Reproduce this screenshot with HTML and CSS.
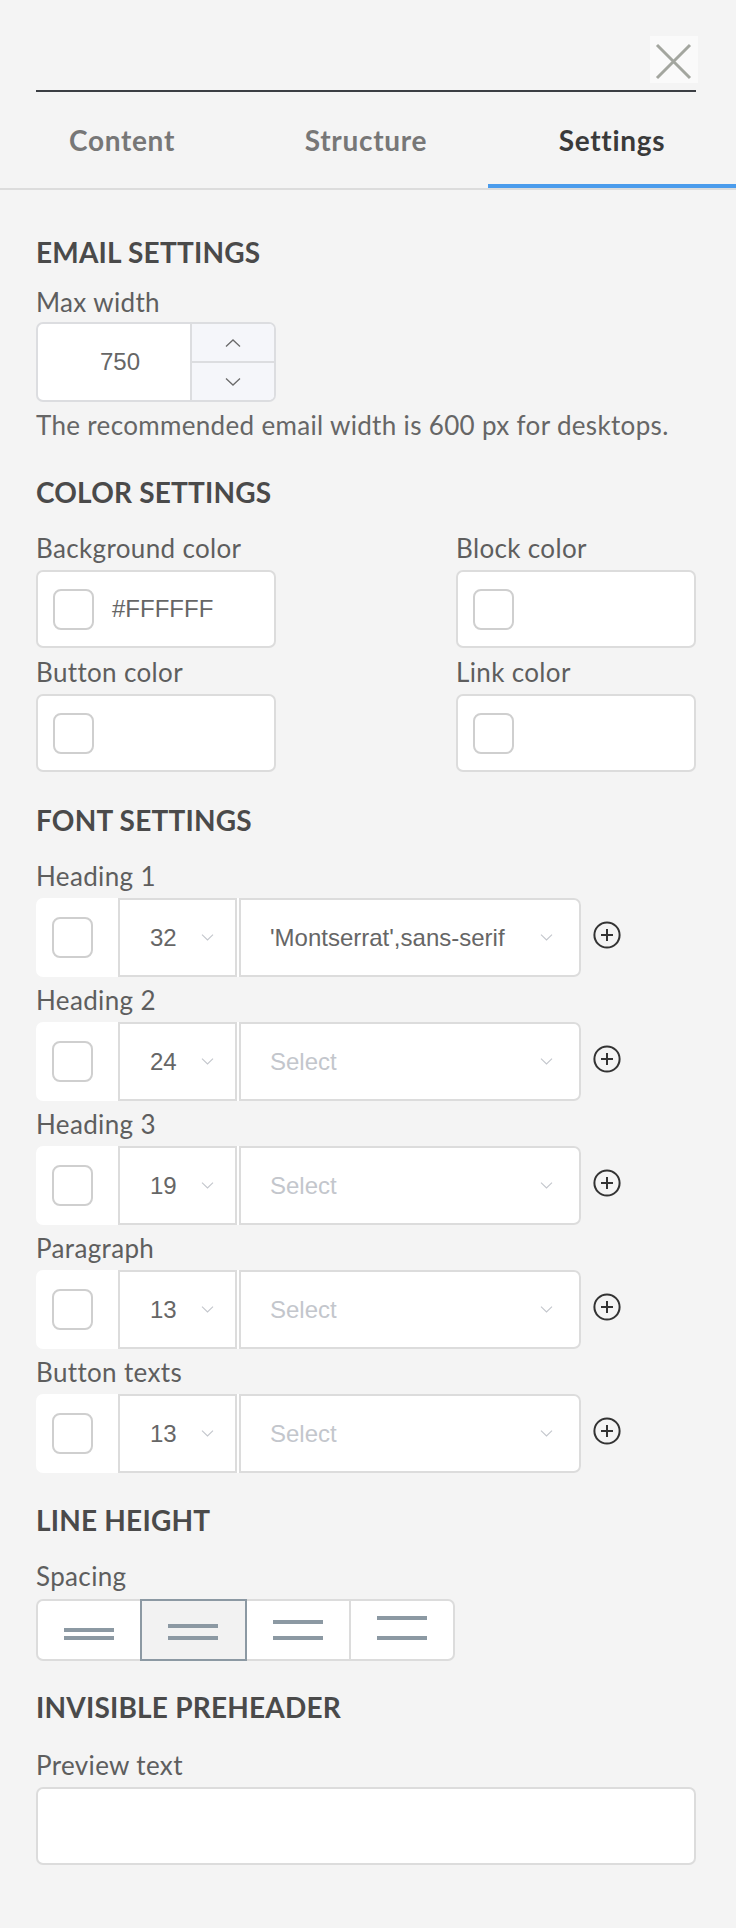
FILE: index.html
```html
<!DOCTYPE html>
<html lang="en">
<head>
<meta charset="utf-8">
<title>Settings</title>
<link rel="stylesheet" href="styles.css">
</head>
<body>
<div class="panel">
  <header class="topbar">
    <div class="title-field"></div>
    <button class="close" aria-label="Close">
      <svg width="48" height="47" viewBox="0 0 48 47"><path d="M7 9 L40 42 M40 9 L7 42" stroke="#a3a69f" stroke-width="3" fill="none"/></svg>
    </button>
  </header>

  <nav class="tabs">
    <div class="tab">Content</div>
    <div class="tab">Structure</div>
    <div class="tab active">Settings</div>
  </nav>

  <main class="content">
    <section class="section first">
      <h2 class="sec-title tight">EMAIL SETTINGS</h2>
      <div class="field-label short">Max width</div>
      <div class="stepper">
        <div class="stepper-value">750</div>
        <div class="stepper-btns">
          <div class="step-btn"><svg width="16" height="8" viewBox="0 0 16 8"><path d="M1 7.5 L8 1 L15 7.5" stroke="#6b6b6b" stroke-width="1.3" fill="none"/></svg></div>
          <div class="step-btn"><svg width="16" height="8" viewBox="0 0 16 8"><path d="M1 0.5 L8 7 L15 0.5" stroke="#6b6b6b" stroke-width="1.3" fill="none"/></svg></div>
        </div>
      </div>
      <p class="hint">The recommended email width is 600 px for desktops.</p>
    </section>

    <section class="section color-sec">
      <h2 class="sec-title">COLOR SETTINGS</h2>
      <div class="color-grid">
        <div class="field">
          <div class="field-label">Background color</div>
          <div class="color-box"><span class="swatch"></span><span class="hex">#FFFFFF</span></div>
        </div>
        <div class="field">
          <div class="field-label">Block color</div>
          <div class="color-box"><span class="swatch"></span></div>
        </div>
        <div class="field">
          <div class="field-label">Button color</div>
          <div class="color-box"><span class="swatch"></span></div>
        </div>
        <div class="field">
          <div class="field-label">Link color</div>
          <div class="color-box"><span class="swatch"></span></div>
        </div>
      </div>
    </section>

    <section class="section font-sec">
      <h2 class="sec-title">FONT SETTINGS</h2>
      <div class="font-list">
        <div class="font-item">
          <div class="field-label">Heading 1</div>
          <div class="font-row">
            <div class="font-fields">
              <div class="swatch-cell"><span class="swatch"></span></div>
              <div class="size-cell"><span class="val">32</span><svg class="chev" width="13" height="7" viewBox="0 0 13 7"><path d="M1 0.7 L6.5 6 L12 0.7" stroke="#c3c6cc" stroke-width="1.1" fill="none"/></svg></div>
              <div class="family-cell"><span class="val">'Montserrat',sans-serif</span><svg class="chev" width="13" height="7" viewBox="0 0 13 7"><path d="M1 0.7 L6.5 6 L12 0.7" stroke="#c3c6cc" stroke-width="1.1" fill="none"/></svg></div>
            </div>
            <svg class="plus" width="28" height="28" viewBox="0 0 28 28"><circle cx="14" cy="14" r="12.6" stroke="#333" stroke-width="2" fill="none"/><path d="M14 8 V20 M8 14 H20" stroke="#333" stroke-width="2"/></svg>
          </div>
        </div>
        <div class="font-item">
          <div class="field-label">Heading 2</div>
          <div class="font-row">
            <div class="font-fields">
              <div class="swatch-cell"><span class="swatch"></span></div>
              <div class="size-cell"><span class="val">24</span><svg class="chev" width="13" height="7" viewBox="0 0 13 7"><path d="M1 0.7 L6.5 6 L12 0.7" stroke="#c3c6cc" stroke-width="1.1" fill="none"/></svg></div>
              <div class="family-cell"><span class="val placeholder">Select</span><svg class="chev" width="13" height="7" viewBox="0 0 13 7"><path d="M1 0.7 L6.5 6 L12 0.7" stroke="#c3c6cc" stroke-width="1.1" fill="none"/></svg></div>
            </div>
            <svg class="plus" width="28" height="28" viewBox="0 0 28 28"><circle cx="14" cy="14" r="12.6" stroke="#333" stroke-width="2" fill="none"/><path d="M14 8 V20 M8 14 H20" stroke="#333" stroke-width="2"/></svg>
          </div>
        </div>
        <div class="font-item">
          <div class="field-label">Heading 3</div>
          <div class="font-row">
            <div class="font-fields">
              <div class="swatch-cell"><span class="swatch"></span></div>
              <div class="size-cell"><span class="val">19</span><svg class="chev" width="13" height="7" viewBox="0 0 13 7"><path d="M1 0.7 L6.5 6 L12 0.7" stroke="#c3c6cc" stroke-width="1.1" fill="none"/></svg></div>
              <div class="family-cell"><span class="val placeholder">Select</span><svg class="chev" width="13" height="7" viewBox="0 0 13 7"><path d="M1 0.7 L6.5 6 L12 0.7" stroke="#c3c6cc" stroke-width="1.1" fill="none"/></svg></div>
            </div>
            <svg class="plus" width="28" height="28" viewBox="0 0 28 28"><circle cx="14" cy="14" r="12.6" stroke="#333" stroke-width="2" fill="none"/><path d="M14 8 V20 M8 14 H20" stroke="#333" stroke-width="2"/></svg>
          </div>
        </div>
        <div class="font-item">
          <div class="field-label">Paragraph</div>
          <div class="font-row">
            <div class="font-fields">
              <div class="swatch-cell"><span class="swatch"></span></div>
              <div class="size-cell"><span class="val">13</span><svg class="chev" width="13" height="7" viewBox="0 0 13 7"><path d="M1 0.7 L6.5 6 L12 0.7" stroke="#c3c6cc" stroke-width="1.1" fill="none"/></svg></div>
              <div class="family-cell"><span class="val placeholder">Select</span><svg class="chev" width="13" height="7" viewBox="0 0 13 7"><path d="M1 0.7 L6.5 6 L12 0.7" stroke="#c3c6cc" stroke-width="1.1" fill="none"/></svg></div>
            </div>
            <svg class="plus" width="28" height="28" viewBox="0 0 28 28"><circle cx="14" cy="14" r="12.6" stroke="#333" stroke-width="2" fill="none"/><path d="M14 8 V20 M8 14 H20" stroke="#333" stroke-width="2"/></svg>
          </div>
        </div>
        <div class="font-item">
          <div class="field-label">Button texts</div>
          <div class="font-row">
            <div class="font-fields">
              <div class="swatch-cell"><span class="swatch"></span></div>
              <div class="size-cell"><span class="val">13</span><svg class="chev" width="13" height="7" viewBox="0 0 13 7"><path d="M1 0.7 L6.5 6 L12 0.7" stroke="#c3c6cc" stroke-width="1.1" fill="none"/></svg></div>
              <div class="family-cell"><span class="val placeholder">Select</span><svg class="chev" width="13" height="7" viewBox="0 0 13 7"><path d="M1 0.7 L6.5 6 L12 0.7" stroke="#c3c6cc" stroke-width="1.1" fill="none"/></svg></div>
            </div>
            <svg class="plus" width="28" height="28" viewBox="0 0 28 28"><circle cx="14" cy="14" r="12.6" stroke="#333" stroke-width="2" fill="none"/><path d="M14 8 V20 M8 14 H20" stroke="#333" stroke-width="2"/></svg>
          </div>
        </div>
      </div>
    </section>

    <section class="section lh-sec">
      <h2 class="sec-title">LINE HEIGHT</h2>
      <div class="field-label spaced">Spacing</div>
      <div class="spacing">
        <div class="seg s1"><i></i><i></i></div>
        <div class="seg s2 selected"><i></i><i></i></div>
        <div class="seg s3"><i></i><i></i></div>
        <div class="seg s4"><i></i><i></i></div>
      </div>
    </section>

    <section class="section pre-sec">
      <h2 class="sec-title wide">INVISIBLE PREHEADER</h2>
      <div class="field-label">Preview text</div>
      <div class="text-input"></div>
    </section>
  </main>
</div>
</body>
</html>
```

FILE: styles.css
```css
* { box-sizing: border-box; }

body {
  margin: 0;
  background: #f4f4f4;
  font-family: Lato, "Noto Sans", sans-serif;
  color: #555;
}

.panel {
  width: 736px;
  min-height: 1928px;
  background: #f4f4f4;
}

/* top bar */
.topbar {
  position: relative;
  height: 92px;
  padding: 0 40px 0 36px;
}
.title-field {
  height: 92px;
  border-bottom: 2px solid #3b3e43;
}
.close {
  position: absolute;
  top: 36px;
  right: 38px;
  width: 48px;
  height: 47px;
  padding: 0;
  border: 0;
  background: #fafafa;
  display: block;
}
.close svg { display: block; }

/* tabs */
.tabs {
  display: grid;
  grid-template-columns: 244px 244px 248px;
  border-bottom: 2px solid #dcdcdc;
}
.tab {
  height: 96px;
  display: flex;
  align-items: center;
  justify-content: center;
  font-size: 28px;
  font-weight: 700;
  letter-spacing: 0.7px;
  color: #777;
}
.tab.active {
  color: #3a3a3a;
  box-shadow: inset 0 -4px 0 #4b9cec;
}

/* content */
.content {
  padding: 0 40px 60px 36px;
}
.section { margin-top: 31px; }
.section.first { margin-top: 46px; }
.color-sec { margin-top: 36px; }
.font-sec { margin-top: 32px; }
.pre-sec { margin-top: 30px; }

.sec-title {
  margin: 0 0 25px;
  font-size: 28px;
  line-height: 32px;
  font-weight: 700;
  letter-spacing: 0.2px;
  color: #4a4a4a;
}
.sec-title.tight { margin-bottom: 19px; }
.sec-title.wide { margin-bottom: 27px; }

.field-label {
  font-size: 26px;
  line-height: 30px;
  font-weight: 400;
  letter-spacing: 0.35px;
  color: #5e5e5e;
  margin-bottom: 7px;
}
.field-label.short { margin-bottom: 5px; }
.field-label.spaced { margin-bottom: 8px; }

/* stepper */
.stepper {
  width: 240px;
  height: 80px;
  display: flex;
  border: 2px solid #dcdde0;
  border-radius: 7px;
  background: #fff;
  overflow: hidden;
}
.stepper-value {
  flex: 1;
  display: flex;
  align-items: center;
  justify-content: center;
  padding-left: 12px;
  font-family: "Liberation Sans", Arial, sans-serif;
  font-size: 24px;
  color: #666;
}
.stepper-btns {
  width: 84px;
  display: flex;
  flex-direction: column;
  border-left: 2px solid #dcdde0;
  background: #f5f6fa;
}
.step-btn {
  flex: 1;
  display: flex;
  align-items: center;
  justify-content: center;
}
.step-btn + .step-btn { border-top: 2px solid #dcdde0; }
.step-btn svg { display: block; }

.hint {
  margin: 8px 0 0;
  font-size: 26px;
  line-height: 30px;
  letter-spacing: 0.33px;
  color: #666;
}

/* color grid */
.color-grid {
  display: grid;
  grid-template-columns: 240px 240px;
  justify-content: space-between;
  row-gap: 9px;
}
.color-box {
  height: 78px;
  display: flex;
  align-items: center;
  padding-left: 15px;
  background: #fff;
  border: 2px solid #dcdcdc;
  border-radius: 7px;
}
.swatch {
  display: block;
  width: 41px;
  height: 41px;
  border: 2px solid #cfcfcf;
  border-radius: 8px;
  background: #fff;
  flex: none;
}
.hex {
  margin-left: 18px;
  font-family: "Liberation Sans", Arial, sans-serif;
  font-size: 24px;
  color: #666;
}

/* font rows */
.font-list {
  display: flex;
  flex-direction: column;
  gap: 8px;
}
.font-row {
  display: flex;
  align-items: flex-start;
  gap: 12px;
}
.font-fields {
  width: 545px;
  height: 79px;
  display: flex;
  gap: 2px;
  background: #fff;
  border-radius: 7px;
}
.swatch-cell {
  width: 80px;
  display: flex;
  align-items: center;
  padding-left: 16px;
}
.size-cell,
.family-cell {
  display: flex;
  align-items: center;
  border: 2px solid #dcdcdc;
  font-family: "Liberation Sans", Arial, sans-serif;
  font-size: 24px;
  color: #666;
}
.size-cell {
  width: 119px;
  padding: 0 21px 0 30px;
}
.family-cell {
  flex: 1;
  padding: 0 26px 0 29px;
  border-radius: 0 7px 7px 0;
}
.val { flex: 1; white-space: nowrap; }
.val.placeholder { color: #c3c6cc; }
.chev { display: block; flex: none; }
.plus { display: block; flex: none; margin-top: 23px; }

/* spacing */
.spacing {
  width: 419px;
  height: 62px;
  display: flex;
  background: #fff;
  border: 2px solid #dcdcdc;
  border-radius: 7px;
}
.seg {
  flex: 1;
  display: flex;
  flex-direction: column;
  align-items: center;
  justify-content: flex-end;
  padding-bottom: 19px;
}
.seg + .seg { border-left: 2px solid #dcdcdc; }
.seg i {
  display: block;
  width: 50px;
  height: 4px;
  background: #8c99a3;
}
.s1 { gap: 4px; }
.s2 { gap: 8px; }
.s3 { gap: 12px; }
.s4 { gap: 16px; }
.seg.selected {
  margin: -2px 0;
  border: 2px solid #8c99a3;
  background: #f2f2f2;
  padding-bottom: 19px;
}
.seg.selected + .seg { border-left: 0; }

/* text input */
.text-input {
  height: 78px;
  background: #fff;
  border: 2px solid #dcdcdc;
  border-radius: 7px;
}
```
